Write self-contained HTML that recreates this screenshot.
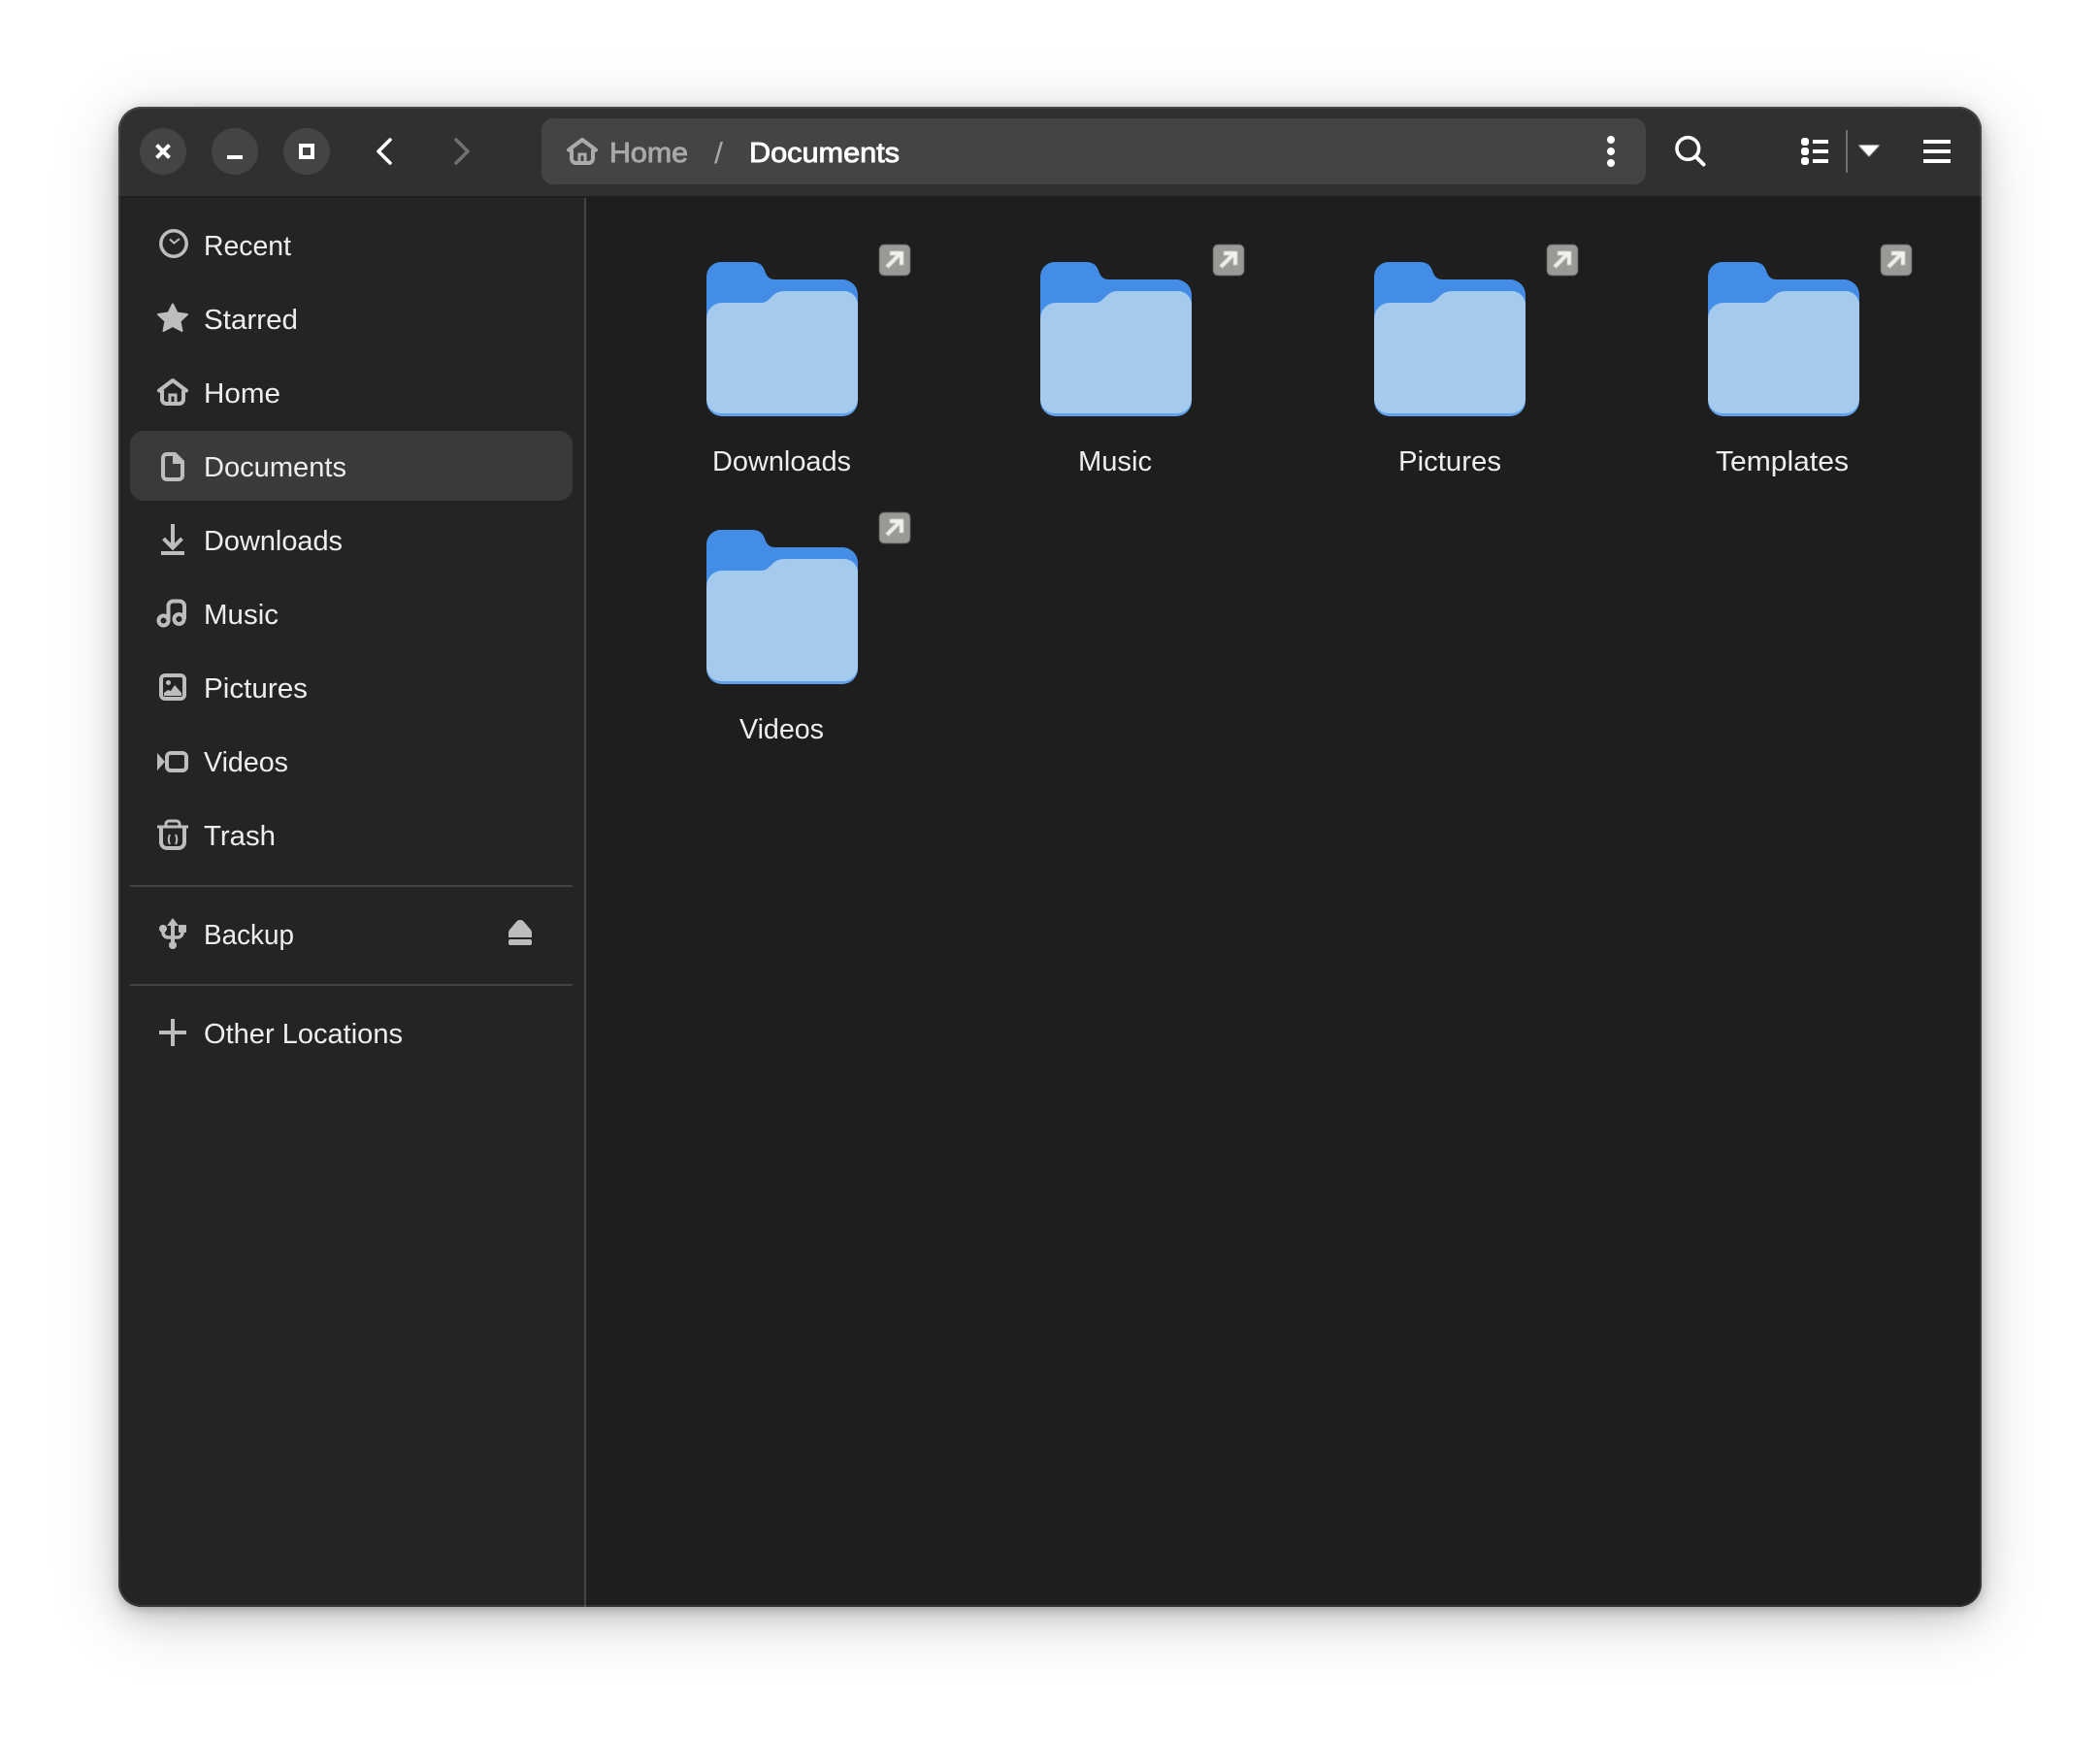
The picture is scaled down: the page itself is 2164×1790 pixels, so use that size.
<!DOCTYPE html>
<html lang="en">
<head>
<meta charset="utf-8">
<title>Documents</title>
<style>
html,body{margin:0;padding:0;background:#fff;width:2164px;height:1790px;overflow:hidden}
#win{position:absolute;left:122px;top:110px;width:1920px;height:1546px;border-radius:24px;background:#1e1e1e;box-shadow:0 3px 10px rgba(0,0,0,.2),0 10px 32px rgba(0,0,0,.14),0 12px 72px rgba(0,0,0,.16)}
svg{position:absolute;left:0;top:0}
#edge{position:absolute;left:122px;top:110px;width:1916px;height:1542px;border:2px solid rgba(255,255,255,.1);border-radius:24px}
text{font-family:"Liberation Sans",sans-serif;font-size:29px;fill:#eeeeee}
.ic{fill:none;stroke:#bdbdbd;stroke-width:4;stroke-linecap:round;stroke-linejoin:round}
.if{fill:#bdbdbd;stroke:none}
.hw{fill:none;stroke:#fff;stroke-width:4;stroke-linejoin:miter}
</style>
</head>
<body>
<div id="win"></div>
<svg width="2164" height="1790" viewBox="0 0 2164 1790" xmlns="http://www.w3.org/2000/svg">
<defs>
<clipPath id="wc"><rect x="122" y="110" width="1920" height="1546" rx="24"/></clipPath>
<filter id="b" x="-20%" y="-20%" width="140%" height="140%"><feGaussianBlur stdDeviation=".6"/></filter>
<g id="folder">
<rect x="0" y="60" width="156" height="99" rx="16" fill="#62a0ea"/>
<path d="M15 0H47C54 0 58 3 60 9C62 15 65 18 71 18H140A16 16 0 0 1 156 34V70H0V15A15 15 0 0 1 15 0Z" fill="#438de6"/>
<path d="M16 42H56C61 42 63 40 67 36C71 32 74 30 81 30H142A14 14 0 0 1 156 44V141A15 15 0 0 1 141 156H15A15 15 0 0 1 0 141V58A16 16 0 0 1 16 42Z" fill="#a4caee"/>
<g filter="url(#b)">
<rect x="178" y="-18" width="32" height="32" rx="5" fill="#9a9996"/>
<path d="M186 5L200 -9M189 -9H201V3" fill="none" stroke="#f0f0ee" stroke-width="4"/>
</g>
</g>
<g id="home">
<path d="M2 12.5L16 2L30 12.5" fill="none" stroke-width="4" stroke-linecap="round" stroke-linejoin="round"/>
<path d="M5 12V21.500A4.500 4.500 0 0 0 9.500 26H22.500A4.500 4.500 0 0 0 27 21.500V12" fill="none" stroke-width="4"/>
<path d="M13 27V17H19V27" fill="none" stroke-width="3"/>
</g>
</defs>
<g clip-path="url(#wc)">
<rect x="122" y="110" width="1920" height="1546" fill="#1e1e1e"/>
<rect x="122" y="202" width="481" height="1454" fill="#242424"/>
<rect x="602" y="204" width="2" height="1452" fill="#454545"/>
<rect x="122" y="110" width="1920" height="92" fill="#303030"/>
<rect x="122" y="202" width="1920" height="2" fill="#1f1f1f"/>
</g>

<!-- header controls -->
<circle cx="168" cy="156" r="24" fill="#444"/>
<circle cx="242" cy="156" r="24" fill="#444"/>
<circle cx="316" cy="156" r="24" fill="#444"/>
<path d="M161.500 149.500L174.500 162.500M174.500 149.500L161.500 162.500" class="hw" stroke-width="4.500"/>
<rect x="234" y="160" width="16" height="4" fill="#fff"/>
<rect x="310" y="150" width="12" height="12" class="hw"/>
<path d="M402 144L390 156L402 168" fill="none" stroke="#fff" stroke-width="3.600" stroke-linecap="round" stroke-linejoin="round"/>
<path d="M470 144L482 156L470 168" fill="none" stroke="#707070" stroke-width="3.600" stroke-linecap="round" stroke-linejoin="round"/>

<rect x="558" y="122" width="1138" height="68" rx="12" fill="#444"/>
<use href="#home" x="584" y="142" stroke="#ababab"/>
<text x="628" y="167" textLength="81" lengthAdjust="spacingAndGlyphs" style="fill:#a8a8a8;stroke:#a8a8a8;stroke-width:.9">Home</text>
<text x="736" y="168" textLength="9" lengthAdjust="spacingAndGlyphs" style="fill:#a8a8a8;font-size:31px">/</text>
<text x="772" y="167" textLength="155" lengthAdjust="spacingAndGlyphs" style="fill:#fff;stroke:#fff;stroke-width:.9">Documents</text>

<circle cx="1660" cy="144" r="4" fill="#fff"/>
<circle cx="1660" cy="156" r="4" fill="#fff"/>
<circle cx="1660" cy="168" r="4" fill="#fff"/>

<circle cx="1739.300" cy="153" r="11.300" fill="none" stroke="#fff" stroke-width="3.600"/>
<path d="M1748.500 162.500L1755.500 169.500" fill="none" stroke="#fff" stroke-width="4" stroke-linecap="round"/>

<rect x="1856" y="142" width="8" height="8" rx="3" fill="#fff"/>
<rect x="1856" y="152" width="8" height="8" rx="3" fill="#fff"/>
<rect x="1856" y="162" width="8" height="8" rx="3" fill="#fff"/>
<rect x="1868" y="144" width="16" height="4" fill="#fff"/>
<rect x="1868" y="154" width="16" height="4" fill="#fff"/>
<rect x="1868" y="164" width="16" height="4" fill="#fff"/>
<rect x="1902" y="134" width="2" height="44" fill="#707070"/>
<path d="M1915 149.500H1937L1926 161.500Z" fill="#fff" filter="url(#b)"/>
<rect x="1982" y="144" width="28" height="4" fill="#fff"/>
<rect x="1982" y="154" width="28" height="4" fill="#fff"/>
<rect x="1982" y="164" width="28" height="4" fill="#fff"/>

<!-- sidebar -->
<rect x="134" y="444" width="456" height="72" rx="14" fill="#3a3a3a"/>
<rect x="134" y="912" width="456" height="2" fill="#434343"/>
<rect x="134" y="1014" width="456" height="2" fill="#434343"/>

<text x="210" y="263" textLength="90" lengthAdjust="spacingAndGlyphs">Recent</text>
<text x="210" y="339" textLength="97" lengthAdjust="spacingAndGlyphs">Starred</text>
<text x="210" y="415" textLength="79" lengthAdjust="spacingAndGlyphs">Home</text>
<text x="210" y="491" textLength="147" lengthAdjust="spacingAndGlyphs">Documents</text>
<text x="210" y="567" textLength="143" lengthAdjust="spacingAndGlyphs">Downloads</text>
<text x="210" y="643" textLength="77" lengthAdjust="spacingAndGlyphs">Music</text>
<text x="210" y="719" textLength="107" lengthAdjust="spacingAndGlyphs">Pictures</text>
<text x="210" y="795" textLength="87" lengthAdjust="spacingAndGlyphs">Videos</text>
<text x="210" y="871" textLength="74" lengthAdjust="spacingAndGlyphs">Trash</text>
<text x="210" y="973" textLength="93" lengthAdjust="spacingAndGlyphs">Backup</text>
<text x="210" y="1075" textLength="205" lengthAdjust="spacingAndGlyphs">Other Locations</text>

<!-- recent -->
<circle cx="179" cy="251" r="13.200" fill="none" stroke="#bdbdbd" stroke-width="3.500"/>
<path d="M175 246.500L179.300 250.500L185 246" fill="none" stroke="#bdbdbd" stroke-width="2"/>
<!-- star -->
<path d="M178 313.500L182.500 322.500L193 324L185.500 331L187.500 341L178 336L168.500 341L170.500 331L163 324L173.500 322.500Z" fill="#bdbdbd" stroke="#bdbdbd" stroke-width="2" stroke-linejoin="round"/>
<!-- home -->
<use href="#home" x="162" y="390" stroke="#bdbdbd"/>
<!-- document -->
<path fill-rule="evenodd" class="if" d="M172 466H181L190 475V490A6 6 0 0 1 184 496H172A6 6 0 0 1 166 490V472A6 6 0 0 1 172 466ZM172 470A2 2 0 0 0 170 472V490A2 2 0 0 0 172 492H184A2 2 0 0 0 186 490V478H178V470Z"/>
<!-- download -->
<path d="M178 540V564M168.500 555L178 564.500L187.500 555" fill="none" stroke="#bdbdbd" stroke-width="4"/>
<rect x="166" y="568" width="24" height="4" class="if"/>
<!-- music -->
<circle cx="168.500" cy="639.500" r="5" fill="none" stroke="#bdbdbd" stroke-width="4"/>
<circle cx="184.500" cy="638" r="5" fill="none" stroke="#bdbdbd" stroke-width="4"/>
<path d="M173.500 640V624A5 5 0 0 1 178.500 619.500H185A5 5 0 0 1 190 624.500V638" fill="none" stroke="#bdbdbd" stroke-width="4"/>
<!-- pictures -->
<rect x="166" y="696" width="24" height="24" rx="4" fill="none" stroke="#bdbdbd" stroke-width="4"/>
<circle cx="173.500" cy="703.500" r="2.500" class="if"/>
<path d="M169 717V714L173 711L176 712L180 706L187 714V717Z" class="if"/>
<!-- videos -->
<rect x="172" y="776" width="20" height="18" rx="4" fill="none" stroke="#bdbdbd" stroke-width="4"/>
<path d="M162 776L170 785L162 794Z" class="if"/>
<!-- trash -->
<path d="M162 852H194" fill="none" stroke="#bdbdbd" stroke-width="3"/>
<path d="M171 851V849A3 3 0 0 1 174 846H182A3 3 0 0 1 185 849V851" fill="none" stroke="#bdbdbd" stroke-width="3"/>
<path d="M166 852V868A6 6 0 0 0 172 874H184A6 6 0 0 0 190 868V852" fill="none" stroke="#bdbdbd" stroke-width="4"/>
<path d="M175 860Q172.500 865 175 870M181 860Q183.500 865 181 870" fill="none" stroke="#bdbdbd" stroke-width="2"/>
<!-- usb -->
<path d="M178 946L172 954H184Z" class="if"/>
<path d="M178 952V974" fill="none" stroke="#bdbdbd" stroke-width="4"/>
<circle cx="178" cy="974" r="4" class="if"/>
<circle cx="168" cy="957" r="4" class="if"/>
<rect x="184" y="953" width="8" height="8" rx="1" class="if"/>
<path d="M168 958V961A5 5 0 0 0 173 966H183A5 5 0 0 0 188 961V958" fill="none" stroke="#bdbdbd" stroke-width="3.500"/>
<!-- eject -->
<path d="M536 948C538 948 539 949 540 950L546 957C547.500 958.500 548 960 548 962V966H524V962C524 960 524.500 958.500 526 957L532 950C533 949 534 948 536 948Z" class="if"/>
<rect x="524" y="968" width="24" height="6" rx="2" class="if"/>
<!-- plus -->
<path d="M178 1050V1078M164 1064H192" fill="none" stroke="#bdbdbd" stroke-width="4"/>

<!-- folders -->
<use href="#folder" x="728" y="270"/>
<use href="#folder" x="1072" y="270"/>
<use href="#folder" x="1416" y="270"/>
<use href="#folder" x="1760" y="270"/>
<use href="#folder" x="728" y="546"/>
<text x="734" y="485" textLength="143" lengthAdjust="spacingAndGlyphs">Downloads</text>
<text x="1111" y="485" textLength="76" lengthAdjust="spacingAndGlyphs">Music</text>
<text x="1441" y="485" textLength="106" lengthAdjust="spacingAndGlyphs">Pictures</text>
<text x="1768" y="485" textLength="137" lengthAdjust="spacingAndGlyphs">Templates</text>
<text x="762" y="761" textLength="87" lengthAdjust="spacingAndGlyphs">Videos</text>
</svg>
<div id="edge"></div>
</body>
</html>
